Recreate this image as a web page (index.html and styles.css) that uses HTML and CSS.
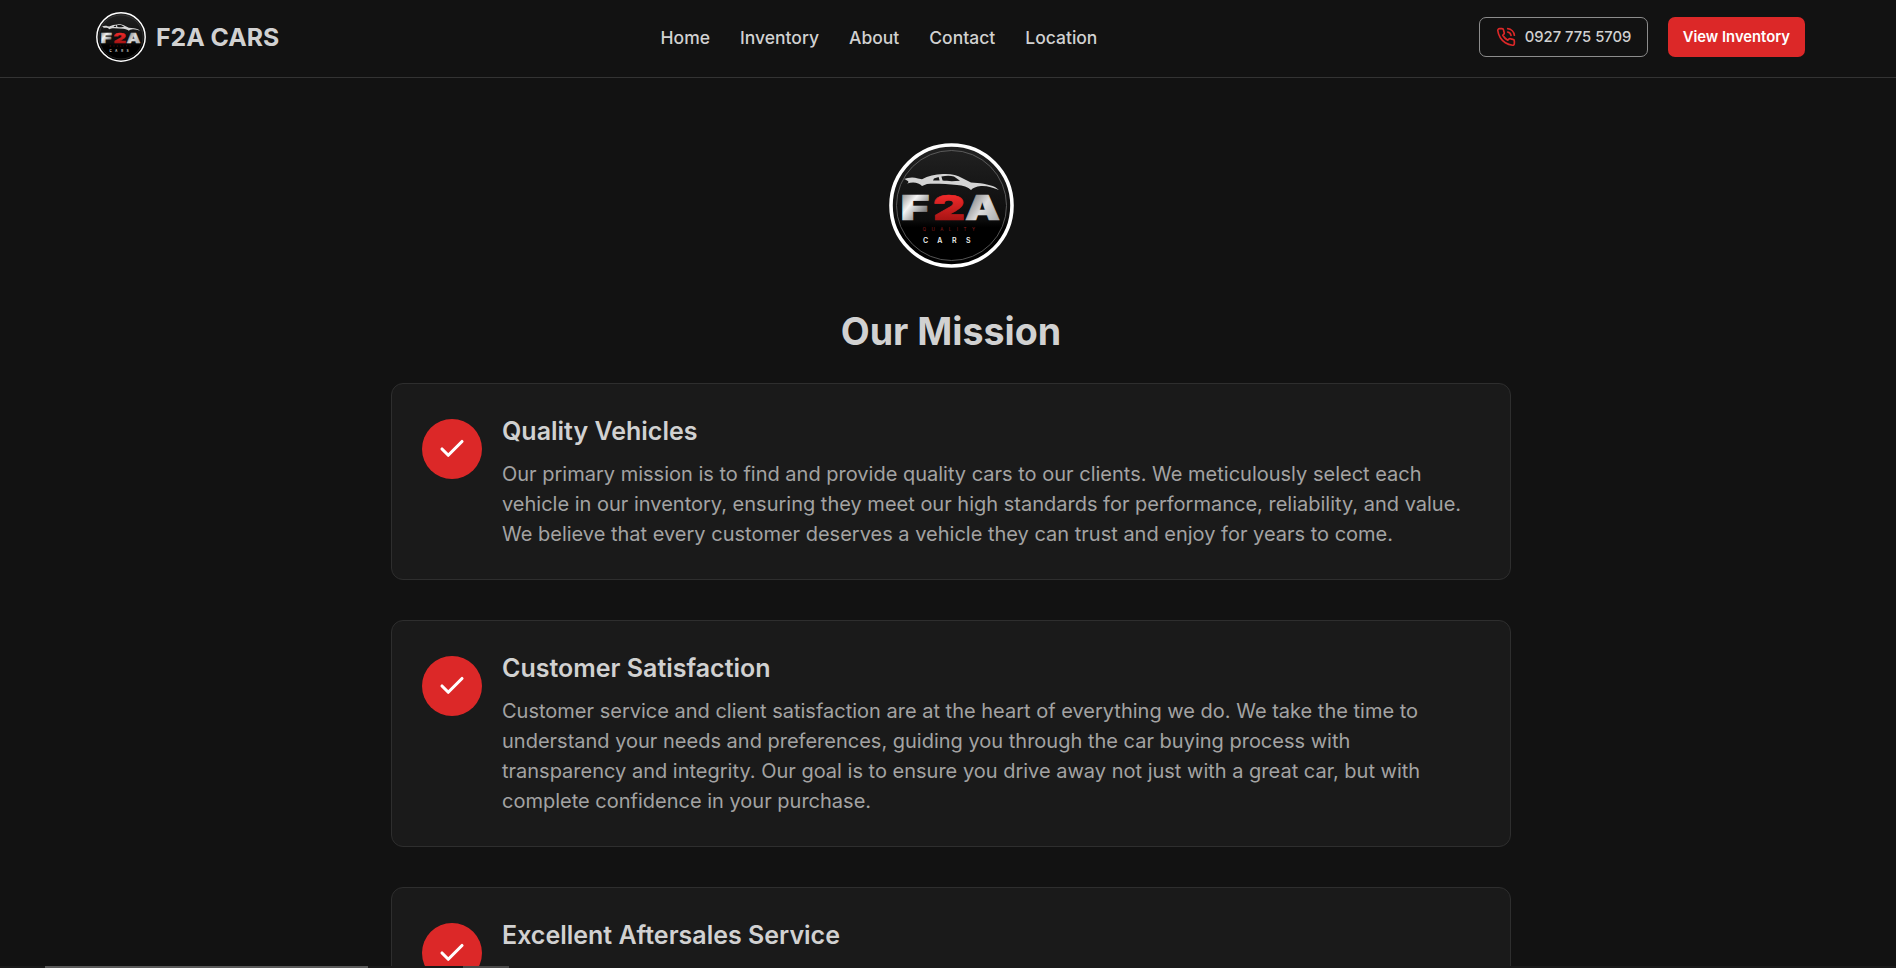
FILE: index.html
```html
<!DOCTYPE html>
<html lang="en">
<head>
  <meta charset="UTF-8">
  <title>F2A CARS</title>
  <link rel="stylesheet" href="styles.css">
</head>
<body>

  <!-- Logo, reused in the header and the hero -->
  <svg class="sprite" width="0" height="0" aria-hidden="true">
    <defs>
      <linearGradient id="chrome-f" gradientUnits="userSpaceOnUse" x1="11" y1="52" x2="42" y2="77">
        <stop offset="0" stop-color="#8a8a8a"/>
        <stop offset="0.35" stop-color="#f4f4f4"/>
        <stop offset="0.75" stop-color="#808080"/>
        <stop offset="1" stop-color="#bdbdbd"/>
      </linearGradient>
      <linearGradient id="chrome-a" gradientUnits="userSpaceOnUse" x1="76" y1="52" x2="112" y2="77">
        <stop offset="0" stop-color="#666666"/>
        <stop offset="0.5" stop-color="#dcdcdc"/>
        <stop offset="1" stop-color="#a8a8a8"/>
      </linearGradient>
      <linearGradient id="red-2" gradientUnits="userSpaceOnUse" x1="44" y1="52" x2="44" y2="77">
        <stop offset="0" stop-color="#f02a2a"/>
        <stop offset="1" stop-color="#a81414"/>
      </linearGradient>
      <linearGradient id="disc" x1="0" y1="0" x2="0" y2="1">
        <stop offset="0" stop-color="#222222"/>
        <stop offset="0.62" stop-color="#0c0c0c"/>
        <stop offset="0.68" stop-color="#000000"/>
        <stop offset="1" stop-color="#000000"/>
      </linearGradient>
      <symbol id="logo" viewBox="0 0 125 125">
        <circle cx="62.5" cy="62.5" r="60.5" fill="url(#disc)" stroke="#ffffff" stroke-width="3.6"/>
        <circle cx="62.5" cy="62.5" r="55" fill="none" stroke="#6a6a6a" stroke-width="0.8"/>
        <path d="M15 36 C19 34.5 24 33.5 29 35.5 L33 36.2 C39 33 46 31.2 54 31 C62 30.6 68 32 73 35 L82 39.4 C90 39.8 100 41 106 44 L110 47 C104 44.5 98 42.6 92 43 C87 43.4 84 45 82 47 C79 44 74 42.5 68 42 C58 41 46 40.5 38 41 L33 43 C30 39.5 24 38.5 18 40.5 C21 39 19 37.5 15 36 Z" fill="#d4d4d4"/>
        <path d="M45 35.6 L49.6 34 L50.6 37.4 L44 37.6 Z M52.4 33.4 C58 32.4 62 32.6 65 33.6 L71 37.8 C64 38.4 58 38.2 53.6 37.6 Z" fill="#161616"/>
        <text class="logo-letter" x="11.5" y="77" textLength="29" lengthAdjust="spacingAndGlyphs" fill="url(#chrome-f)" stroke="url(#chrome-f)">F</text>
        <text class="logo-letter" x="44" y="77" textLength="32" lengthAdjust="spacingAndGlyphs" fill="url(#red-2)" stroke="url(#red-2)">2</text>
        <text class="logo-letter" x="76" y="77" textLength="35" lengthAdjust="spacingAndGlyphs" fill="url(#chrome-a)" stroke="url(#chrome-a)">A</text>
        <text class="logo-quality" x="62.5" y="87.5" text-anchor="middle">QUALITY</text>
        <text class="logo-cars" x="62.5" y="100" text-anchor="middle">CARS</text>
      </symbol>
    </defs>
  </svg>

  <header class="site-header">
    <a class="brand" href="#">
      <svg class="brand-logo"><use href="#logo"/></svg>
      <span class="brand-name">F2A CARS</span>
    </a>
    <nav class="main-nav">
      <a href="#">Home</a>
      <a href="#">Inventory</a>
      <a href="#">About</a>
      <a href="#">Contact</a>
      <a href="#">Location</a>
    </nav>
    <div class="header-actions">
      <a class="btn btn-outline" href="#">
        <svg class="phone-icon" viewBox="0 0 24 24" fill="none" stroke="currentColor" stroke-width="2" stroke-linecap="round" stroke-linejoin="round">
          <path d="M22 16.92v3a2 2 0 0 1-2.18 2 19.79 19.79 0 0 1-8.63-3.07 19.5 19.5 0 0 1-6-6 19.79 19.79 0 0 1-3.07-8.67A2 2 0 0 1 4.11 2h3a2 2 0 0 1 2 1.72c.13.96.36 1.9.7 2.81a2 2 0 0 1-.45 2.11L8.09 9.91a16 16 0 0 0 6 6l1.27-1.27a2 2 0 0 1 2.11-.45c.91.34 1.85.57 2.81.7A2 2 0 0 1 22 16.92z"/>
          <path d="M14.05 2a9 9 0 0 1 8 7.94"/>
          <path d="M14.05 6A5 5 0 0 1 18 10"/>
        </svg>
        0927 775 5709
      </a>
      <a class="btn btn-red" href="#">View Inventory</a>
    </div>
  </header>

  <main class="mission">
    <div class="hero-logo-wrap">
      <svg class="hero-logo"><use href="#logo"/></svg>
    </div>
    <h1>Our Mission</h1>

    <section class="card">
      <div class="check">
        <svg viewBox="0 0 24 24" fill="none" stroke="currentColor" stroke-width="2.5" stroke-linecap="round" stroke-linejoin="round"><path d="M20 6 9 17l-5-5"/></svg>
      </div>
      <div class="card-body">
        <h2>Quality Vehicles</h2>
        <p>Our primary mission is to find and provide quality cars to our clients. We meticulously select each vehicle in our inventory, ensuring they meet our high standards for performance, reliability, and value. We believe that every customer deserves a vehicle they can trust and enjoy for years to come.</p>
      </div>
    </section>

    <section class="card">
      <div class="check">
        <svg viewBox="0 0 24 24" fill="none" stroke="currentColor" stroke-width="2.5" stroke-linecap="round" stroke-linejoin="round"><path d="M20 6 9 17l-5-5"/></svg>
      </div>
      <div class="card-body">
        <h2>Customer Satisfaction</h2>
        <p>Customer service and client satisfaction are at the heart of everything we do. We take the time to understand your needs and preferences, guiding you through the car buying process with transparency and integrity. Our goal is to ensure you drive away not just with a great car, but with complete confidence in your purchase.</p>
      </div>
    </section>

    <section class="card card-cut">
      <div class="check">
        <svg viewBox="0 0 24 24" fill="none" stroke="currentColor" stroke-width="2.5" stroke-linecap="round" stroke-linejoin="round"><path d="M20 6 9 17l-5-5"/></svg>
      </div>
      <div class="card-body">
        <h2>Excellent Aftersales Service</h2>
      </div>
    </section>
  </main>

  <div class="scroll-strip"><span class="thumb-a"></span><span class="thumb-b"></span></div>

</body>
</html>
```

FILE: styles.css
```css
* {
  box-sizing: border-box;
}
html, body {
  height: 968px;
  overflow: hidden;
}
body {
  margin: 0;
  background: #121212;
  color: #d1d1d1;
  font-family: Inter, "Liberation Sans", sans-serif;
}
a {
  color: inherit;
  text-decoration: none;
}
.sprite {
  display: block;
  height: 0;
}
.logo-letter {
  font-size: 34px;
  font-weight: 900;
  stroke-width: 0.7px;
}
.logo-quality {
  fill: #8f1a1a;
  font-size: 4.5px;
  letter-spacing: 5.5px;
}
.logo-cars {
  fill: #ececec;
  font-size: 7px;
  font-weight: 600;
  letter-spacing: 9.5px;
}
.site-header {
  display: flex;
  align-items: center;
  justify-content: space-between;
  height: 78px;
  padding: 0 91px 3px 96px;
  border-bottom: 1px solid #333333;
}
.brand {
  display: flex;
  align-items: center;
  gap: 10px;
}
.brand-logo {
  width: 50px;
  height: 50px;
}
.brand-name {
  font-size: 24.8px;
  font-weight: 700;
}
.main-nav {
  display: flex;
  gap: 30px;
  font-size: 17.5px;
  font-weight: 500;
}
.header-actions {
  display: flex;
  gap: 20px;
}
.btn {
  display: flex;
  align-items: center;
  height: 40px;
  border-radius: 7px;
  font-size: 14.8px;
  font-weight: 600;
}
.btn-outline {
  gap: 9px;
  width: 169px;
  padding-left: 16px;
  border: 1px solid #8c8c8c;
  font-weight: 500;
}
.btn-red {
  padding: 0 15px;
  background: #dc2828;
  color: #ffffff;
}
.phone-icon {
  width: 20px;
  height: 20px;
  color: #dc2828;
}
.mission {
  width: 1120px;
  margin-left: 391px;
}
.hero-logo-wrap {
  display: flex;
  justify-content: center;
  padding-top: 65px;
}
.hero-logo {
  width: 125px;
  height: 125px;
}
h1 {
  margin: 41px 0 29px;
  text-align: center;
  font-size: 37.6px;
  line-height: 45px;
  font-weight: 700;
}
.card {
  display: flex;
  gap: 20px;
  margin-bottom: 40px;
  padding: 32px 30px 30px 30px;
  background: #1a1a1a;
  border: 1px solid #2e2e2e;
  border-radius: 12px;
}
.card-cut {
  min-height: 197px;
}
.check {
  display: flex;
  align-items: center;
  justify-content: center;
  flex-shrink: 0;
  width: 60px;
  height: 60px;
  margin-top: 3px;
  border-radius: 50%;
  background: #dc2828;
  color: #ffffff;
}
.check svg {
  width: 30px;
  height: 30px;
}
h2 {
  margin: 0 0 12px;
  font-size: 25px;
  line-height: 31px;
  font-weight: 600;
}
.card-body p {
  margin: 0;
  font-size: 20px;
  line-height: 30px;
  color: #a3a3a3;
}
.scroll-strip {
  position: fixed;
  left: 0;
  right: 0;
  bottom: 0;
  height: 2px;
  background: #1a1a1a;
}
.thumb-a {
  position: absolute;
  left: 45px;
  width: 323px;
  height: 2px;
  background: #5a5a5a;
}
.thumb-b {
  position: absolute;
  left: 463px;
  width: 46px;
  height: 2px;
  background: #4a4a4a;
}
```
